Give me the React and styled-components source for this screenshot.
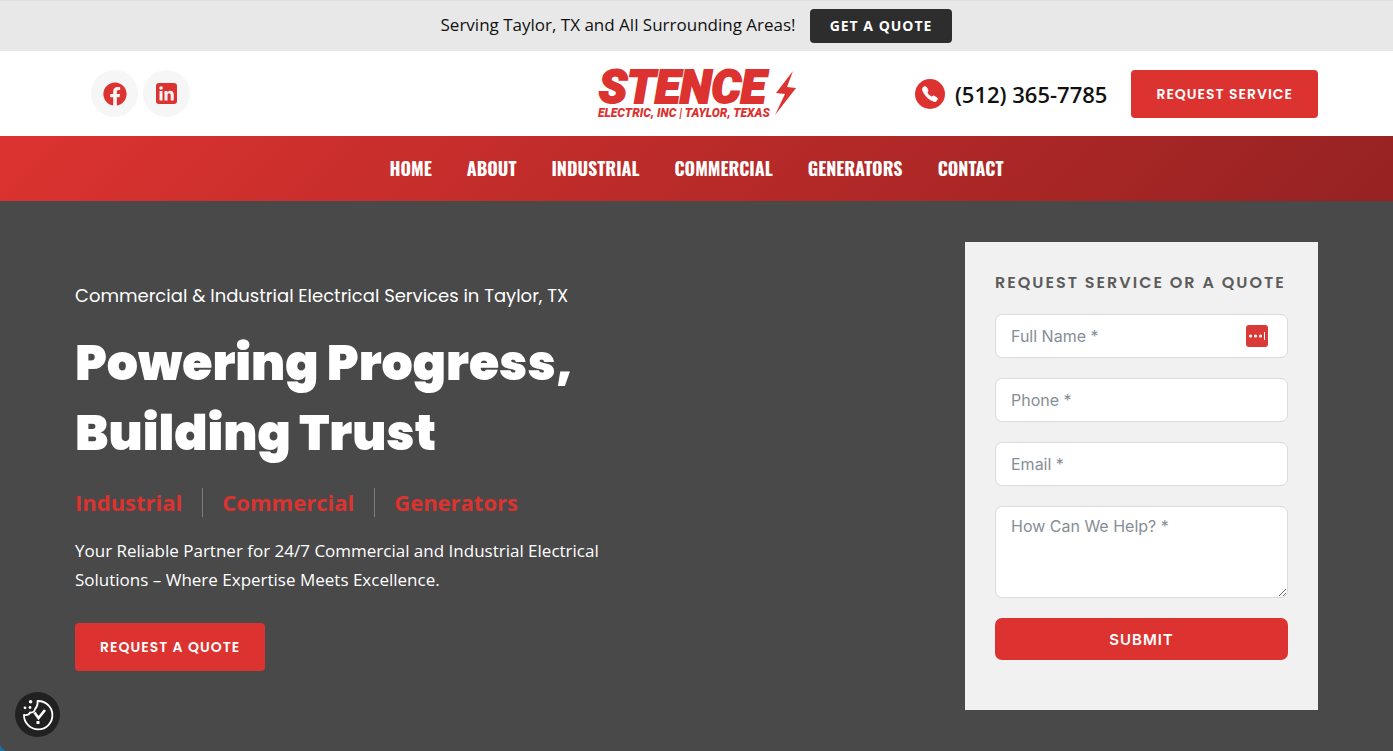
import React from "react";
import styled, { createGlobalStyle } from "styled-components";
import { FaFacebook } from "react-icons/fa";
import { IoCall } from "react-icons/io5";

const red = "#dc3330";
const body = `"Open Sans", "Noto Sans", sans-serif`;
const heading = `Poppins, Lato, sans-serif`;

const GlobalStyle = createGlobalStyle`
  * {
    box-sizing: border-box;
  }

  body {
    margin: 0;
    background-color: #1d6fa8;
    font-family: ${body};
  }

  h1, h2, p, ul {
    margin: 0;
    padding: 0;
  }
`;

const Page = styled.div`
  min-height: 100vh;
  display: flex;
  flex-direction: column;
  background-color: #494949;
  border-bottom-left-radius: 8px;
`;

const TopBar = styled.div`
  display: flex;
  align-items: baseline;
  justify-content: center;
  gap: 14px;
  padding: 8px 20px;
  background-color: #e8e8e8;
  border-top: 1px solid #dfdfdf;
  font-size: 17px;
  line-height: 30px;
  color: #111;
`;

const Button = styled.a`
  display: inline-block;
  background-color: ${(props) => (props.$dark ? "#2d2d2d" : red)};
  color: #fff;
  font-family: ${(props) => (props.$dark ? body : heading)};
  font-size: 14px;
  font-weight: ${(props) => (props.$dark ? 700 : 600)};
  line-height: ${(props) => (props.$dark ? 34 : 48)}px;
  letter-spacing: 1px;
  padding: 0 ${(props) => (props.$dark ? 20 : 25)}px;
  border-radius: 4px;
  text-decoration: none;
  white-space: nowrap;
`;

const Header = styled.header`
  display: grid;
  grid-template-columns: 1fr auto 1fr;
  align-items: center;
  padding: 18px 75px;
  background-color: #fff;
`;

const Socials = styled.div`
  display: flex;
  gap: 5px;
  padding-left: 16px;
`;

const SocialLink = styled.a`
  display: flex;
  align-items: center;
  justify-content: center;
  width: 47px;
  height: 47px;
  border-radius: 50%;
  background-color: #f6f6f6;
  color: ${red};
  font-size: 24px;
`;

const LogoLink = styled.a`
  display: block;
  height: 49px;
`;

const LogoSvg = styled.svg`
  display: block;
  overflow: visible;
  fill: ${red};
  font-family: Roboto, sans-serif;
  font-weight: 900;
  font-style: italic;
`;

const HeaderRight = styled.div`
  display: flex;
  align-items: center;
  justify-content: flex-end;
  gap: 24px;
`;

const PhoneLink = styled.a`
  display: flex;
  align-items: center;
  gap: 10px;
  color: #111;
  font-size: 22px;
  font-weight: 600;
  line-height: 30px;
  text-decoration: none;
  white-space: nowrap;
`;

const PhoneIcon = styled.span`
  display: flex;
  align-items: center;
  justify-content: center;
  width: 30px;
  height: 30px;
  border-radius: 50%;
  background-color: ${red};
  color: #fff;
  font-size: 18px;
`;

const Nav = styled.nav`
  display: flex;
  justify-content: center;
  gap: 35px;
  background: linear-gradient(135deg, ${red} 0%, #962222 100%);
`;

const NavLink = styled.a`
  color: #fff;
  font-family: Oswald, "Liberation Sans Narrow", sans-serif;
  font-size: 18px;
  font-weight: 700;
  line-height: 65px;
  text-decoration: none;
`;

const Hero = styled.main`
  flex: 1;
  display: flex;
  align-items: center;
  justify-content: space-between;
  gap: 40px;
  padding: 40px 75px;
`;

const HeroText = styled.div`
  max-width: 560px;
  color: #fff;
`;

const Tagline = styled.p`
  font-family: ${heading};
  font-size: 18px;
  line-height: 28px;
`;

const Title = styled.h1`
  margin-top: 18px;
  font-family: ${heading};
  font-size: 49px;
  font-weight: 900;
  line-height: 70px;
`;

const Services = styled.ul`
  display: flex;
  margin-top: 20px;
  list-style: none;
`;

const Service = styled.li`
  padding-right: 20px;
  color: ${red};
  font-size: 22px;
  font-weight: 700;
  line-height: 29px;

  & + & {
    padding-left: 19px;
    border-left: 1px solid #7d7d7d;
  }
`;

const Intro = styled.p`
  margin: 19px 0 29px;
  font-size: 17px;
  line-height: 29px;
`;

const QuoteForm = styled.form`
  display: flex;
  flex-direction: column;
  gap: 20px;
  width: 353px;
  padding: 30px 30px 50px;
  background-color: #f1f1f1;
`;

const FormTitle = styled.h2`
  color: #5c5c5c;
  font-family: ${heading};
  font-size: 16px;
  font-weight: 600;
  line-height: 22px;
  letter-spacing: 2px;
  white-space: nowrap;
`;

const Field = styled.div`
  position: relative;
  display: flex;
`;

const Input = styled.input`
  width: 100%;
  height: ${(props) => (props.as === "textarea" ? 92 : 44)}px;
  padding: 7px 15px;
  border: 1px solid #dadbdd;
  border-radius: 7px;
  background-color: #fff;
  font-family: Inter, sans-serif;
  font-size: 16px;
  line-height: 24px;
  outline: none;

  &::placeholder {
    color: #868e96;
    opacity: 1;
  }
`;

const AutofillButton = styled.button`
  position: absolute;
  top: 11px;
  right: 20px;
  width: 22px;
  height: 22px;
  padding: 0;
  border: none;
  background: none;
`;

const Submit = styled.button`
  height: 42px;
  border: none;
  border-radius: 7px;
  background-color: ${red};
  color: #fff;
  font-family: Inter, sans-serif;
  font-size: 15px;
  font-weight: 600;
  letter-spacing: 1px;
`;

const CookieButton = styled.button`
  position: fixed;
  left: 15px;
  bottom: 14px;
  width: 45px;
  height: 45px;
  padding: 0;
  border: none;
  border-radius: 50%;
  background-color: #212121;
`;

const Logo = () => (
  <LogoSvg width="198" height="49" viewBox="0 0 198 49">
    <text x="1" y="34" fontSize="46" stroke={red} strokeWidth="2">
      STENCE
    </text>
    <text x="0" y="48" fontSize="12">
      ELECTRIC, INC | TAYLOR, TEXAS
    </text>
    <path d="M195 2 L178 24 L187 25 L177 46 L198 19 L189 18 Z" />
  </LogoSvg>
);

const LinkedinIcon = () => (
  <svg width="21" height="21" viewBox="0 0 21 21">
    <rect width="21" height="21" rx="3" fill={red} />
    <g fill="#f6f6f6">
      <circle cx="5" cy="5" r="1.8" />
      <rect x="3.5" y="8" width="3" height="9.5" />
      <path d="M8.5 8 h2.9 v1.4 c.6-1 1.6-1.6 2.9-1.6 2.4 0 3.4 1.5 3.4 4.1 v5.6 h-3 v-5.1 c0-1.3-.4-2.1-1.5-2.1 -1.2 0-1.7.9-1.7 2.2 v5 h-3 Z" />
    </g>
  </svg>
);

const CookieIcon = () => (
  <svg width="45" height="45" viewBox="0 0 45 45" fill="none" stroke="#fff">
    <path
      d="M22.5 9 A14.2 14.2 0 1 1 9 23 Q14 23.5 15 20.5 Q19.5 21 20 17 Q23 14 22.5 9 Z"
      strokeWidth="1.8"
      strokeLinejoin="round"
    />
    <path d="M19.5 20.5 L23.5 26 L30 18" strokeWidth="2.6" />
    <g fill="#fff" stroke="none">
      <circle cx="15.6" cy="9.7" r="1.8" />
      <circle cx="15" cy="15.5" r="1.4" />
      <circle cx="10" cy="15.8" r="1.4" />
      <rect x="21.5" y="29" width="3" height="3" />
    </g>
  </svg>
);

const AutofillIcon = () => (
  <svg width="22" height="22" viewBox="0 0 22 22">
    <rect width="22" height="22" rx="3" fill="#d93a37" />
    <g fill="#fff">
      <circle cx="4.5" cy="11" r="1.6" />
      <circle cx="9.5" cy="11" r="1.6" />
      <circle cx="14.5" cy="11" r="1.6" />
      <rect x="18" y="7" width="1" height="8" />
    </g>
  </svg>
);

const links = [
  "HOME",
  "ABOUT",
  "INDUSTRIAL",
  "COMMERCIAL",
  "GENERATORS",
  "CONTACT",
];

const App = () => {
  return (
    <Page>
      <GlobalStyle />
      <TopBar>
        <span>Serving Taylor, TX and All Surrounding Areas!</span>
        <Button href="#quote" $dark>
          GET A QUOTE
        </Button>
      </TopBar>
      <Header>
        <Socials>
          <SocialLink href="#facebook" aria-label="Facebook">
            <FaFacebook />
          </SocialLink>
          <SocialLink href="#linkedin" aria-label="LinkedIn">
            <LinkedinIcon />
          </SocialLink>
        </Socials>
        <LogoLink href="#home" aria-label="Stence Electric">
          <Logo />
        </LogoLink>
        <HeaderRight>
          <PhoneLink href="tel:5123657785">
            <PhoneIcon>
              <IoCall />
            </PhoneIcon>
            (512) 365-7785
          </PhoneLink>
          <Button href="#quote">REQUEST SERVICE</Button>
        </HeaderRight>
      </Header>
      <Nav>
        {links.map((link) => (
          <NavLink key={link} href={"#" + link.toLowerCase()}>
            {link}
          </NavLink>
        ))}
      </Nav>
      <Hero>
        <HeroText>
          <Tagline>
            Commercial &amp; Industrial Electrical Services in Taylor, TX
          </Tagline>
          <Title>
            Powering Progress,
            <br />
            Building Trust
          </Title>
          <Services>
            <Service>Industrial</Service>
            <Service>Commercial</Service>
            <Service>Generators</Service>
          </Services>
          <Intro>
            Your Reliable Partner for 24/7 Commercial and Industrial Electrical
            Solutions – Where Expertise Meets Excellence.
          </Intro>
          <Button href="#quote">REQUEST A QUOTE</Button>
        </HeroText>
        <QuoteForm id="quote">
          <FormTitle>REQUEST SERVICE OR A QUOTE</FormTitle>
          <Field>
            <Input type="text" placeholder="Full Name *" aria-label="Full Name" />
            <AutofillButton type="button" aria-label="Autofill">
              <AutofillIcon />
            </AutofillButton>
          </Field>
          <Field>
            <Input type="tel" placeholder="Phone *" aria-label="Phone" />
          </Field>
          <Field>
            <Input type="email" placeholder="Email *" aria-label="Email" />
          </Field>
          <Field>
            <Input
              as="textarea"
              placeholder="How Can We Help? *"
              aria-label="How Can We Help?"
            />
          </Field>
          <Submit type="submit">SUBMIT</Submit>
        </QuoteForm>
      </Hero>
      <CookieButton aria-label="Cookie settings">
        <CookieIcon />
      </CookieButton>
    </Page>
  );
};

export default App;
